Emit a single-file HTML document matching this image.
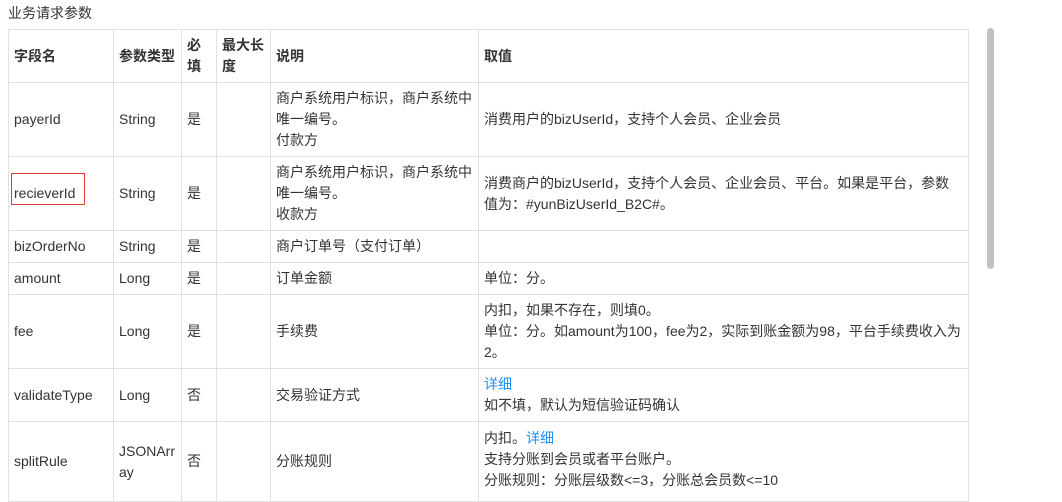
<!DOCTYPE html>
<html><head><meta charset="utf-8"><style>
body{margin:0;background:#fff;font-family:"Liberation Sans","Noto Sans CJK SC",sans-serif;font-size:14px;color:#333;width:1062px;height:485px;overflow:hidden;position:relative}
.title{position:absolute;left:8px;top:3px;font-size:14px;color:#333}
table{position:absolute;left:8px;top:29px;border-collapse:collapse;table-layout:fixed;width:960px}
td,th{border:1px solid #dfe2e5;padding:0 5px;vertical-align:middle;line-height:21px;text-align:left;overflow:hidden;word-break:break-all}
th{font-weight:bold;color:#333}
a{color:#1e90ff;text-decoration:none}
.red{position:absolute;left:11px;top:173px;width:74px;height:32px;border:1px solid #e53935;box-sizing:border-box}
.sb{position:absolute;left:987px;top:28px;width:7px;height:241px;background:#c1c1c1;border-radius:4px}
</style></head><body>
<div class="title">业务请求参数</div>
<table>
<colgroup><col style="width:105px"><col style="width:68px"><col style="width:35px"><col style="width:54px"><col style="width:208px"><col style="width:490px"></colgroup>
<tr style="height:53px"><th>字段名</th><th>参数类型</th><th>必填</th><th>最大长度</th><th>说明</th><th>取值</th></tr>
<tr style="height:74px"><td>payerId</td><td>String</td><td>是</td><td></td><td>商户系统用户标识，商户系统中唯一编号。<br>付款方</td><td>消费用户的bizUserId，支持个人会员、企业会员</td></tr>
<tr style="height:74px"><td>recieverId</td><td>String</td><td>是</td><td></td><td>商户系统用户标识，商户系统中唯一编号。<br>收款方</td><td>消费商户的bizUserId，支持个人会员、企业会员、平台。如果是平台，参数值为：#yunBizUserId_B2C#。</td></tr>
<tr style="height:32px"><td>bizOrderNo</td><td>String</td><td>是</td><td></td><td>商户订单号（支付订单）</td><td></td></tr>
<tr style="height:32px"><td>amount</td><td>Long</td><td>是</td><td></td><td>订单金额</td><td>单位：分。</td></tr>
<tr style="height:74px"><td>fee</td><td>Long</td><td>是</td><td></td><td>手续费</td><td>内扣，如果不存在，则填0。<br>单位：分。如amount为100，fee为2，实际到账金额为98，平台手续费收入为2。</td></tr>
<tr style="height:53px"><td>validateType</td><td>Long</td><td>否</td><td></td><td>交易验证方式</td><td><a>详细</a><br>如不填，默认为短信验证码确认</td></tr>
<tr style="height:80px"><td>splitRule</td><td>JSONArray</td><td>否</td><td></td><td>分账规则</td><td style="vertical-align:top;padding-top:6px">内扣。<a>详细</a><br>支持分账到会员或者平台账户。<br>分账规则：分账层级数&lt;=3，分账总会员数&lt;=10</td></tr>
</table>
<div class="red"></div>
<div class="sb"></div>
</body></html>
